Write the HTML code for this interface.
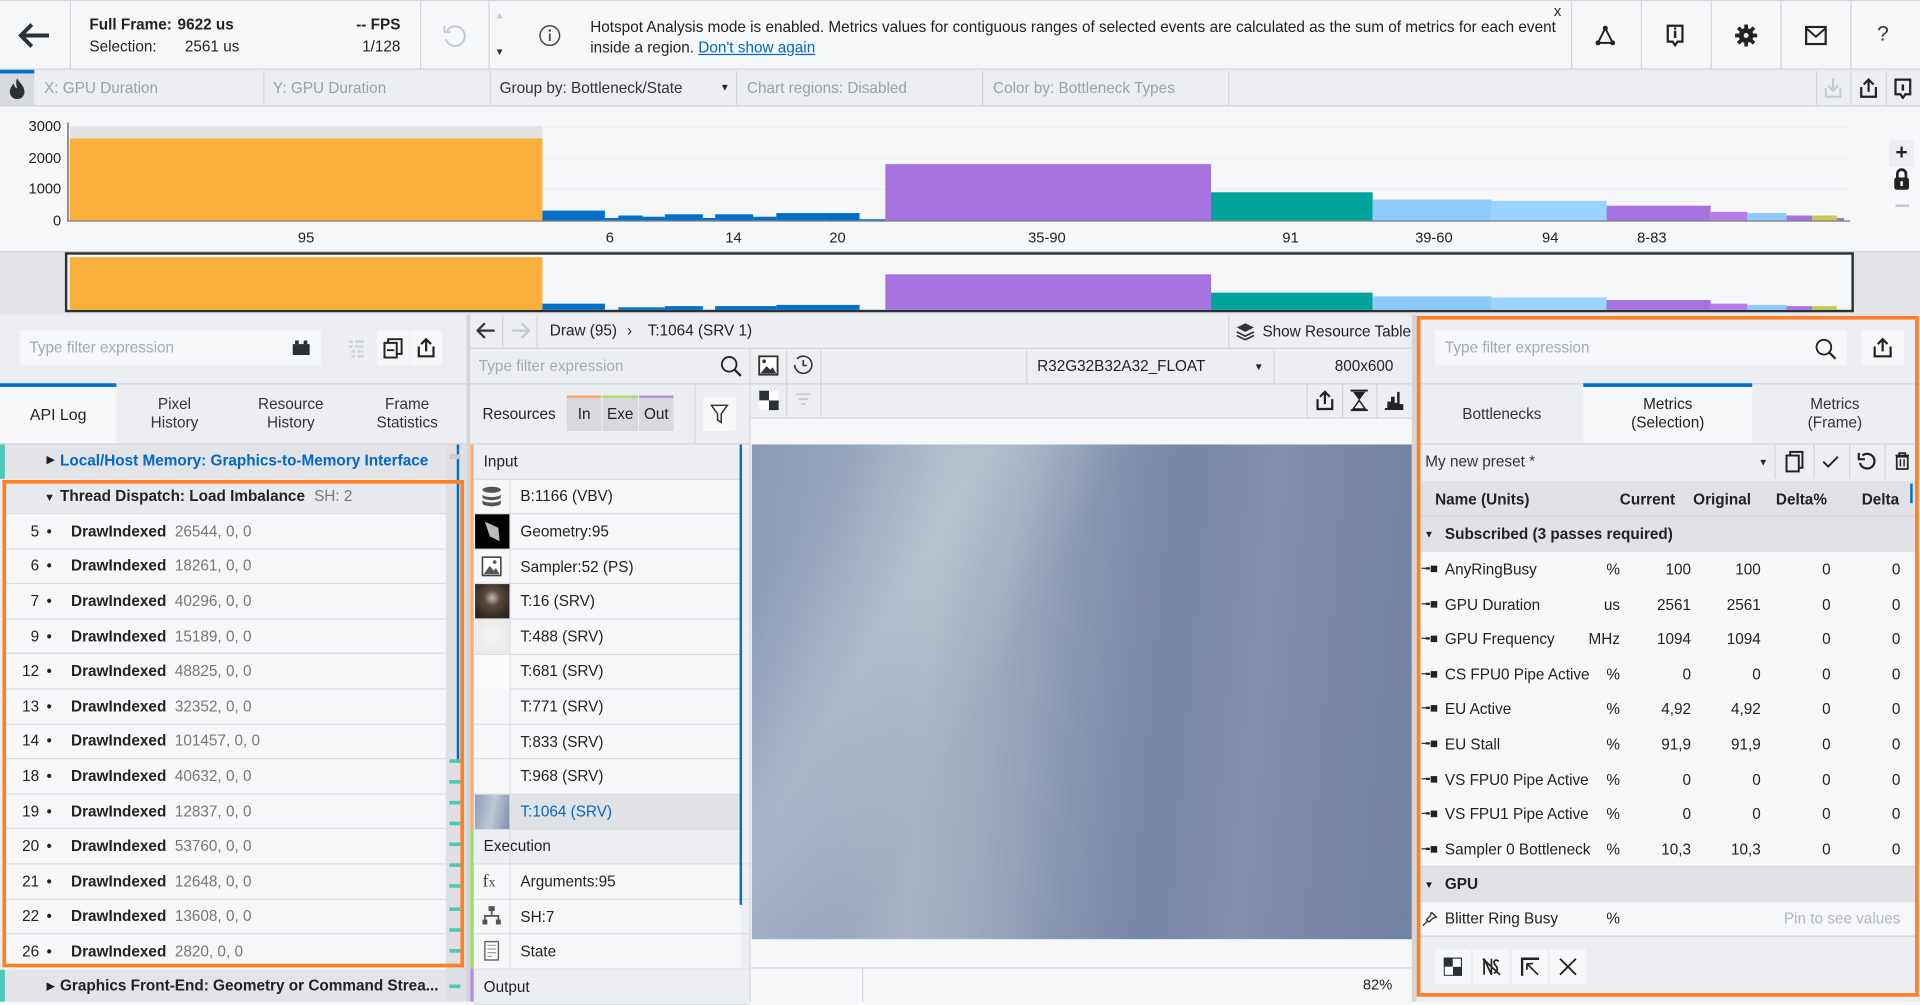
<!DOCTYPE html>
<html><head><meta charset="utf-8">
<style>
*{box-sizing:border-box;margin:0;padding:0}
html,body{width:1920px;height:1001px;overflow:hidden;background:#f6f7f9}
body{font-family:"Liberation Sans",sans-serif;color:#222;font-size:12.5px}
#w{position:absolute;left:0;top:0;width:1568px;height:818px;transform:scale(1.22449);transform-origin:0 0;background:#f6f7f9}
.a{position:absolute;white-space:nowrap}
.g{color:#9aa0a8}
.row{position:absolute;left:0;height:28.6px;border-bottom:1px solid #dcdee2;display:flex;align-items:center;white-space:nowrap}
.tb{background:#eceef1}
.bar{position:absolute}
.cell{position:absolute;text-align:right;white-space:nowrap}
</style></head><body><div id="w">

<!-- top bar -->
<div class="a" style="left:0;top:0;width:1568px;height:57px;background:#f6f7f9;border-top:1px solid #d3d5d9;border-bottom:1px solid #cfd1d5"></div>
<div class="a" style="left:57px;top:1px;width:1px;height:56px;background:#d3d5d9"></div>
<div class="a" style="left:343px;top:1px;width:1px;height:56px;background:#d3d5d9"></div>
<div class="a" style="left:399px;top:1px;width:1px;height:56px;background:#d3d5d9"></div>
<svg class="a" style="left:14px;top:17px" width="28" height="24" viewBox="0 0 28 24"><path d="M12 3 L3 12 L12 21 M3 12 H26" stroke="#2b2f36" stroke-width="3.2" fill="none"/></svg>
<div class="a" style="left:73px;top:13px;font-weight:bold">Full Frame:</div>
<div class="a" style="left:145px;top:13px;font-weight:bold">9622 us</div>
<div class="a" style="left:73px;top:31px">Selection:</div>
<div class="a" style="left:151px;top:31px">2561 us</div>
<div class="a" style="left:260px;top:13px;width:67px;text-align:right;font-weight:bold">-- FPS</div>
<div class="a" style="left:260px;top:31px;width:67px;text-align:right">1/128</div>
<svg class="a" style="left:360px;top:19px" width="22" height="22" viewBox="0 0 22 22"><path d="M5 6 A8 8 0 1 1 4 13" stroke="#c4c7cc" stroke-width="1.6" fill="none"/><path d="M3 2 V7 H8" stroke="#c4c7cc" stroke-width="1.6" fill="none"/></svg>
<div class="a" style="left:404px;top:8px;font-size:8px;color:#c4c7cc">▲</div>
<div class="a" style="left:404px;top:38px;font-size:8px;color:#333">▼</div>
<svg class="a" style="left:440px;top:20px" width="18" height="18" viewBox="0 0 18 18"><circle cx="9" cy="9" r="8" stroke="#444" stroke-width="1.2" fill="none"/><path d="M9 7.5V13.5" stroke="#444" stroke-width="1.4"/><circle cx="9" cy="5" r="1" fill="#444"/></svg>
<div class="a" style="left:482px;top:14px;font-size:12.5px;line-height:17px;width:790px;white-space:normal">Hotspot Analysis mode is enabled. Metrics values for contiguous ranges of selected events are calculated as the sum of metrics for each event inside a region. <span style="color:#0068c9;text-decoration:underline">Don't show again</span></div>
<div class="a" style="left:1269px;top:2px;font-size:12px">x</div>
<div class="a" style="left:1283px;top:1px;width:1px;height:56px;background:#d3d5d9"></div>
<div class="a" style="left:1340px;top:1px;width:1px;height:56px;background:#d3d5d9"></div>
<div class="a" style="left:1397px;top:1px;width:1px;height:56px;background:#d3d5d9"></div>
<div class="a" style="left:1454px;top:1px;width:1px;height:56px;background:#d3d5d9"></div>
<div class="a" style="left:1511px;top:1px;width:1px;height:56px;background:#d3d5d9"></div>
<svg class="a" style="left:1302px;top:20px" width="18" height="18" viewBox="0 0 18 18"><path d="M9 3 L3 15 H15 Z" stroke="#222" stroke-width="1.6" fill="none"/><circle cx="9" cy="3" r="2" fill="#222"/><circle cx="3" cy="15" r="2" fill="#222"/><circle cx="15" cy="15" r="2" fill="#222"/></svg>
<svg class="a" style="left:1360px;top:19px" width="16" height="20" viewBox="0 0 16 20"><path d="M2 2 H14 V15 H10 L8 18 L6 15 H2 Z" stroke="#222" stroke-width="1.8" fill="none"/><path d="M8 6V12" stroke="#222" stroke-width="2"/><circle cx="8" cy="4.3" r="1" fill="#222"/></svg>
<svg class="a" style="left:1416px;top:19px" width="20" height="20" viewBox="0 0 20 20"><circle cx="10" cy="10" r="6" fill="#222"/><path d="M10 1V19M1 10H19M3.6 3.6L16.4 16.4M16.4 3.6L3.6 16.4" stroke="#222" stroke-width="3"/><circle cx="10" cy="10" r="2" fill="#f6f7f9"/></svg>
<svg class="a" style="left:1474px;top:21px" width="18" height="16" viewBox="0 0 18 16"><rect x="1" y="1" width="16" height="14" stroke="#222" stroke-width="1.8" fill="none"/><path d="M1 2 L9 9 L17 2" stroke="#222" stroke-width="1.6" fill="none"/></svg>
<div class="a" style="left:1533px;top:18px;font-size:17px;color:#333">?</div>

<!-- toolbar -->
<div class="a tb" style="left:0;top:57px;width:1568px;height:30px;border-bottom:1px solid #cfd1d5"></div>
<div class="a" style="left:0;top:57px;width:28px;height:30px;background:#d7d9dd;border-top:3px solid #0070c9"></div>
<svg class="a" style="left:7px;top:63px" width="14" height="18" viewBox="0 0 14 18"><path d="M7 1 C9 5 13 7 13 12 A6 6 0 0 1 1 12 C1 9 3 7 4 5 C5 8 6 9 7 9 C6 6 6 3 7 1Z" fill="#2b2f36"/></svg>
<div class="a g" style="left:36px;top:65px">X: GPU Duration</div>
<div class="a" style="left:215px;top:58px;width:1px;height:29px;background:#d3d5d9"></div>
<div class="a g" style="left:223px;top:65px">Y: GPU Duration</div>
<div class="a" style="left:400px;top:58px;width:1px;height:29px;background:#d3d5d9"></div>
<div class="a" style="left:408px;top:65px;color:#333">Group by: Bottleneck/State</div>
<div class="a" style="left:588px;top:67px;font-size:8px">▼</div>
<div class="a" style="left:601px;top:58px;width:1px;height:29px;background:#d3d5d9"></div>
<div class="a g" style="left:610px;top:65px">Chart regions: Disabled</div>
<div class="a" style="left:802px;top:58px;width:1px;height:29px;background:#d3d5d9"></div>
<div class="a g" style="left:811px;top:65px">Color by: Bottleneck Types</div>
<div class="a" style="left:1003px;top:58px;width:1px;height:29px;background:#d3d5d9"></div>
<div class="a" style="left:1483px;top:58px;width:1px;height:29px;background:#d3d5d9"></div>
<div class="a" style="left:1511px;top:58px;width:1px;height:29px;background:#d3d5d9"></div>
<div class="a" style="left:1540px;top:58px;width:1px;height:29px;background:#d3d5d9"></div>
<svg class="a" style="left:1489px;top:63px" width="16" height="18" viewBox="0 0 16 18"><path d="M8 1V11M4 7L8 11L12 7M2 9V16H14V9" stroke="#c4c7cc" stroke-width="1.6" fill="none"/></svg>
<svg class="a" style="left:1518px;top:63px" width="16" height="18" viewBox="0 0 16 18"><path d="M8 12V2M4 6L8 2L12 6M2 8V16H14V8" stroke="#222" stroke-width="1.8" fill="none"/></svg>
<svg class="a" style="left:1546px;top:63px" width="16" height="18" viewBox="0 0 16 18"><path d="M2 2 H14 V14 H10 L8 17 L6 14 H2 Z" stroke="#222" stroke-width="1.8" fill="none"/><path d="M8 6V11" stroke="#222" stroke-width="2"/></svg>

<!-- chart -->
<div class="a" style="left:0;top:88px;width:1568px;height:117px;background:#f6f7f9"></div>
<div class="a" style="left:56px;top:103px;width:1455px;height:1px;background:#eceef1"></div>
<div class="a" style="left:56px;top:129px;width:1455px;height:1px;background:#eceef1"></div>
<div class="a" style="left:56px;top:154px;width:1455px;height:1px;background:#eceef1"></div>
<div class="a" style="left:55px;top:100px;width:1px;height:81px;background:#555"></div>
<div class="a" style="left:10px;top:96px;width:40px;text-align:right;font-size:12px">3000</div>
<div class="a" style="left:10px;top:122px;width:40px;text-align:right;font-size:12px">2000</div>
<div class="a" style="left:10px;top:147px;width:40px;text-align:right;font-size:12px">1000</div>
<div class="a" style="left:10px;top:173px;width:40px;text-align:right;font-size:12px">0</div>
<div class="bar" style="left:57px;top:103px;width:386px;height:10px;background:#e1e2e6"></div>
<div class="bar" style="left:57px;top:113px;width:386px;height:67px;background:#fbb03b"></div>
<div class="bar" style="left:443px;top:172px;width:51px;height:8px;background:#0070c9"></div>
<div class="bar" style="left:494px;top:178px;width:11px;height:2px;background:#0070c9"></div>
<div class="bar" style="left:505px;top:176px;width:20px;height:4px;background:#0070c9"></div>
<div class="bar" style="left:525px;top:177px;width:18px;height:3px;background:#0070c9"></div>
<div class="bar" style="left:543px;top:175px;width:31px;height:5px;background:#0070c9"></div>
<div class="bar" style="left:574px;top:178px;width:10px;height:2px;background:#0070c9"></div>
<div class="bar" style="left:584px;top:175px;width:31px;height:5px;background:#0070c9"></div>
<div class="bar" style="left:615px;top:177px;width:19px;height:3px;background:#0070c9"></div>
<div class="bar" style="left:634px;top:174px;width:41px;height:6px;background:#0070c9"></div>
<div class="bar" style="left:675px;top:174px;width:27px;height:6px;background:#006cc2"></div>
<div class="bar" style="left:702px;top:179px;width:21px;height:1px;background:#0070c9"></div>
<div class="bar" style="left:723px;top:134px;width:266px;height:46px;background:#a773e0"></div>
<div class="bar" style="left:989px;top:157px;width:132px;height:23px;background:#00a49c"></div>
<div class="bar" style="left:1121px;top:163px;width:97px;height:17px;background:#8ccbfb"></div>
<div class="bar" style="left:1218px;top:164px;width:94px;height:16px;background:#9ad3fd"></div>
<div class="bar" style="left:1312px;top:168px;width:85px;height:12px;background:#a773e0"></div>
<div class="bar" style="left:1397px;top:173px;width:30px;height:7px;background:#b37eec"></div>
<div class="bar" style="left:1427px;top:174px;width:32px;height:6px;background:#8ccbfb"></div>
<div class="bar" style="left:1459px;top:176px;width:21px;height:4px;background:#a773e0"></div>
<div class="bar" style="left:1480px;top:176px;width:20px;height:4px;background:#c4cd52"></div>
<div class="bar" style="left:1500px;top:178px;width:6px;height:2px;background:#a773e0"></div>
<div class="a" style="left:55px;top:180px;width:1456px;height:1px;background:#777"></div>
<div class="a" style="left:240px;top:187px;width:20px;text-align:center;font-size:12px">95</div>
<div class="a" style="left:488px;top:187px;width:20px;text-align:center;font-size:12px">6</div>
<div class="a" style="left:589px;top:187px;width:20px;text-align:center;font-size:12px">14</div>
<div class="a" style="left:674px;top:187px;width:20px;text-align:center;font-size:12px">20</div>
<div class="a" style="left:835px;top:187px;width:40px;text-align:center;font-size:12px">35-90</div>
<div class="a" style="left:1044px;top:187px;width:20px;text-align:center;font-size:12px">91</div>
<div class="a" style="left:1151px;top:187px;width:40px;text-align:center;font-size:12px">39-60</div>
<div class="a" style="left:1256px;top:187px;width:20px;text-align:center;font-size:12px">94</div>
<div class="a" style="left:1329px;top:187px;width:40px;text-align:center;font-size:12px">8-83</div>
<div class="a" style="left:1543px;top:114px;width:20px;height:22px;background:#eceef1;text-align:center;font-size:17px;font-weight:bold;line-height:21px">+</div>
<svg class="a" style="left:1546px;top:137px" width="14" height="19" viewBox="0 0 14 19"><path d="M3.5 8V5A3.5 3.5 0 0 1 10.5 5V8" stroke="#222" stroke-width="2.2" fill="none"/><rect x="1" y="8" width="12" height="10" rx="2" fill="#222"/><rect x="6" y="11" width="2" height="4" fill="#fff"/></svg>
<div class="a" style="left:1548px;top:167px;width:11px;height:2px;background:#c4c7cc"></div>

<!-- overview -->
<div class="a" style="left:0;top:205px;width:1568px;height:52px;background:#e3e4e8;border-top:1px solid #cfd1d5"></div>
<div class="a" style="left:53px;top:206px;width:1461px;height:49px;background:#f6f7f9;border:2px solid #2b2f36"></div>
<div class="bar" style="left:57px;top:210px;width:386px;height:43px;background:#fbb03b"></div>
<div class="bar" style="left:443px;top:248px;width:51px;height:5px;background:#0070c9"></div>
<div class="bar" style="left:505px;top:251px;width:38px;height:2px;background:#0070c9"></div>
<div class="bar" style="left:543px;top:250px;width:31px;height:3px;background:#0070c9"></div>
<div class="bar" style="left:584px;top:250px;width:50px;height:3px;background:#0070c9"></div>
<div class="bar" style="left:634px;top:249px;width:68px;height:4px;background:#0070c9"></div>
<div class="bar" style="left:723px;top:224px;width:266px;height:29px;background:#a773e0"></div>
<div class="bar" style="left:989px;top:239px;width:132px;height:14px;background:#00a49c"></div>
<div class="bar" style="left:1121px;top:242px;width:97px;height:11px;background:#8ccbfb"></div>
<div class="bar" style="left:1218px;top:243px;width:94px;height:10px;background:#9ad3fd"></div>
<div class="bar" style="left:1312px;top:245px;width:85px;height:8px;background:#a773e0"></div>
<div class="bar" style="left:1397px;top:248px;width:30px;height:5px;background:#b37eec"></div>
<div class="bar" style="left:1427px;top:249px;width:32px;height:4px;background:#8ccbfb"></div>
<div class="bar" style="left:1459px;top:250px;width:21px;height:3px;background:#a773e0"></div>
<div class="bar" style="left:1480px;top:250px;width:20px;height:3px;background:#c4cd52"></div>

<!-- LEFT PANEL -->
<div class="a tb" style="left:0;top:257px;width:381px;height:561px"></div>
<div class="a" style="left:381px;top:257px;width:3px;height:561px;background:#d3d5d9"></div>
<div class="a" style="left:16px;top:270px;width:246px;height:28px;background:#f6f7f9"></div>
<div class="a g" style="left:24px;top:277px;color:#a5aab1">Type filter expression</div>
<svg class="a" style="left:239px;top:278px" width="14" height="12" viewBox="0 0 14 12"><rect x="0" y="3" width="14" height="9" fill="#2b2f36"/><rect x="2" y="0" width="3" height="3" fill="#2b2f36"/><rect x="9" y="0" width="3" height="3" fill="#2b2f36"/></svg>
<svg class="a" style="left:284px;top:277px" width="14" height="16" viewBox="0 0 14 16"><path d="M1 2h3M6 2h7M1 6h3M6 6h7M3 10h3M8 10h5M3 14h3M8 14h5" stroke="#d0d3d8" stroke-width="2"/></svg>
<div class="a" style="left:308px;top:270px;width:26px;height:28px;background:#f6f7f9"></div>
<div class="a" style="left:335px;top:270px;width:26px;height:28px;background:#f6f7f9"></div>
<svg class="a" style="left:313px;top:276px" width="16" height="17" viewBox="0 0 16 17"><rect x="1" y="4" width="10" height="12" stroke="#222" stroke-width="1.6" fill="none"/><path d="M4 4V1H15V13H11" stroke="#222" stroke-width="1.6" fill="none"/><path d="M3 10H9" stroke="#222" stroke-width="1.6"/></svg>
<svg class="a" style="left:340px;top:275px" width="16" height="18" viewBox="0 0 16 18"><path d="M8 12V2M4 6L8 2L12 6M2 8V16H14V8" stroke="#222" stroke-width="1.8" fill="none"/></svg>
<div class="a" style="left:0;top:313px;width:381px;height:1px;background:#d3d5d9"></div>
<div class="a" style="left:0;top:313px;width:95px;height:49px;background:#f6f7f9;border-top:3px solid #0070c9"></div>
<div class="a" style="left:0;top:331px;width:95px;text-align:center;font-size:13px">API Log</div>
<div class="a" style="left:95px;top:323px;width:95px;text-align:center;line-height:15px;color:#333">Pixel<br>History</div>
<div class="a" style="left:190px;top:323px;width:95px;text-align:center;line-height:15px;color:#333">Resource<br>History</div>
<div class="a" style="left:285px;top:323px;width:95px;text-align:center;line-height:15px;color:#333">Frame<br>Statistics</div>
<div class="a" style="left:0;top:362px;width:381px;height:1px;background:#d3d5d9"></div>
<!-- tree -->
<div class="a" style="left:0;top:363px;width:364px;height:28px;background:#e3e4e8"></div>
<div class="a" style="left:0;top:363px;width:4px;height:28px;background:#4ec9b8"></div>
<div class="a" style="left:38px;top:370px;font-size:9px">▶</div>
<div class="a" style="left:49px;top:369px;font-weight:bold;color:#0068c9">Local/Host Memory: Graphics-to-Memory Interface</div>
<div class="a" style="left:4px;top:393px;width:360px;height:27px;background:#e9eaee;border-bottom:1px solid #dcdee2"></div>
<div class="a" style="left:36px;top:401px;font-size:9px">▼</div>
<div class="a" style="left:49px;top:398px;font-weight:bold">Thread Dispatch: Load Imbalance <span style="font-weight:normal;color:#777;margin-left:4px">SH: 2</span></div>
<div class="a" style="left:4px;top:420px;width:360px;height:372px;background:#f6f7f9"></div>
<div class="a" style="left:4px;top:420px;width:360px">
<div class="row" style="top:0;width:360px"><span style="width:28px;text-align:right">5</span><span style="width:26px;padding-left:6px">•</span><b>DrawIndexed</b><span style="color:#777;margin-left:7px">26544, 0, 0</span></div>
<div class="row" style="top:28.6px;width:360px"><span style="width:28px;text-align:right">6</span><span style="width:26px;padding-left:6px">•</span><b>DrawIndexed</b><span style="color:#777;margin-left:7px">18261, 0, 0</span></div>
<div class="row" style="top:57.2px;width:360px"><span style="width:28px;text-align:right">7</span><span style="width:26px;padding-left:6px">•</span><b>DrawIndexed</b><span style="color:#777;margin-left:7px">40296, 0, 0</span></div>
<div class="row" style="top:85.8px;width:360px"><span style="width:28px;text-align:right">9</span><span style="width:26px;padding-left:6px">•</span><b>DrawIndexed</b><span style="color:#777;margin-left:7px">15189, 0, 0</span></div>
<div class="row" style="top:114.4px;width:360px"><span style="width:28px;text-align:right">12</span><span style="width:26px;padding-left:6px">•</span><b>DrawIndexed</b><span style="color:#777;margin-left:7px">48825, 0, 0</span></div>
<div class="row" style="top:143px;width:360px"><span style="width:28px;text-align:right">13</span><span style="width:26px;padding-left:6px">•</span><b>DrawIndexed</b><span style="color:#777;margin-left:7px">32352, 0, 0</span></div>
<div class="row" style="top:171.6px;width:360px"><span style="width:28px;text-align:right">14</span><span style="width:26px;padding-left:6px">•</span><b>DrawIndexed</b><span style="color:#777;margin-left:7px">101457, 0, 0</span></div>
<div class="row" style="top:200.2px;width:360px"><span style="width:28px;text-align:right">18</span><span style="width:26px;padding-left:6px">•</span><b>DrawIndexed</b><span style="color:#777;margin-left:7px">40632, 0, 0</span></div>
<div class="row" style="top:228.8px;width:360px"><span style="width:28px;text-align:right">19</span><span style="width:26px;padding-left:6px">•</span><b>DrawIndexed</b><span style="color:#777;margin-left:7px">12837, 0, 0</span></div>
<div class="row" style="top:257.4px;width:360px"><span style="width:28px;text-align:right">20</span><span style="width:26px;padding-left:6px">•</span><b>DrawIndexed</b><span style="color:#777;margin-left:7px">53760, 0, 0</span></div>
<div class="row" style="top:286px;width:360px"><span style="width:28px;text-align:right">21</span><span style="width:26px;padding-left:6px">•</span><b>DrawIndexed</b><span style="color:#777;margin-left:7px">12648, 0, 0</span></div>
<div class="row" style="top:314.6px;width:360px"><span style="width:28px;text-align:right">22</span><span style="width:26px;padding-left:6px">•</span><b>DrawIndexed</b><span style="color:#777;margin-left:7px">13608, 0, 0</span></div>
<div class="row" style="top:343.2px;width:360px;border:none"><span style="width:28px;text-align:right">26</span><span style="width:26px;padding-left:6px">•</span><b>DrawIndexed</b><span style="color:#777;margin-left:7px">2820, 0, 0</span></div>
</div>
<div class="a" style="left:0;top:792px;width:364px;height:26px;background:#e3e4e8"></div>
<div class="a" style="left:0;top:792px;width:4px;height:26px;background:#4ec9b8"></div>
<div class="a" style="left:38px;top:800px;font-size:9px">▶</div>
<div class="a" style="left:49px;top:798px;font-weight:bold">Graphics Front-End: Geometry or Command Strea...</div>
<!-- scrollbar -->
<div class="a" style="left:364px;top:363px;width:17px;height:455px;background:#dfe0e4"></div>
<div class="a" style="left:373px;top:363px;width:2px;height:260px;background:#0070c9"></div>
<div class="a" style="left:367px;top:371px;width:9px;height:4px;background:#c9ccd1"></div>
<div class="a" style="left:367px;top:620px;width:9px;height:3px;background:#4ec9b8"></div>
<div class="a" style="left:367px;top:637px;width:9px;height:3px;background:#4ec9b8"></div>
<div class="a" style="left:367px;top:654px;width:9px;height:3px;background:#4ec9b8"></div>
<div class="a" style="left:367px;top:671px;width:9px;height:3px;background:#4ec9b8"></div>
<div class="a" style="left:367px;top:688px;width:9px;height:3px;background:#4ec9b8"></div>
<div class="a" style="left:367px;top:705px;width:9px;height:3px;background:#4ec9b8"></div>
<div class="a" style="left:367px;top:722px;width:9px;height:3px;background:#4ec9b8"></div>
<div class="a" style="left:367px;top:741px;width:9px;height:3px;background:#4ec9b8"></div>
<div class="a" style="left:367px;top:758px;width:9px;height:3px;background:#4ec9b8"></div>
<div class="a" style="left:367px;top:775px;width:9px;height:3px;background:#4ec9b8"></div>
<div class="a" style="left:367px;top:804px;width:9px;height:3px;background:#4ec9b8"></div>
<div class="a" style="left:2px;top:392px;width:377px;height:398px;border:3px solid #ff7f27"></div>

<!-- MIDDLE: header -->
<div class="a tb" style="left:384px;top:257px;width:773px;height:28px;border-bottom:1px solid #d3d5d9"></div>
<svg class="a" style="left:389px;top:263px" width="16" height="14" viewBox="0 0 16 14"><path d="M7 1L1 7L7 13M1 7H15" stroke="#333" stroke-width="1.8" fill="none"/></svg>
<svg class="a" style="left:417px;top:263px" width="16" height="14" viewBox="0 0 16 14"><path d="M9 1L15 7L9 13M15 7H1" stroke="#c4c7cc" stroke-width="1.8" fill="none"/></svg>
<div class="a" style="left:410px;top:258px;width:1px;height:27px;background:#d3d5d9"></div>
<div class="a" style="left:438px;top:258px;width:1px;height:27px;background:#d3d5d9"></div>
<div class="a" style="left:449px;top:263px">Draw (95)</div>
<div class="a" style="left:512px;top:263px">›</div>
<div class="a" style="left:529px;top:263px">T:1064 (SRV 1)</div>
<div class="a" style="left:1003px;top:258px;width:1px;height:27px;background:#d3d5d9"></div>
<svg class="a" style="left:1009px;top:263px" width="16" height="15" viewBox="0 0 16 15"><path d="M8 1L15 4.5L8 8L1 4.5Z" fill="#333"/><path d="M1 8L8 11.5L15 8M1 11L8 14.5L15 11" stroke="#333" stroke-width="1.4" fill="none"/></svg>
<div class="a" style="left:1031px;top:264px">Show Resource Table</div>
<!-- resources list panel -->
<div class="a tb" style="left:384px;top:285px;width:228px;height:533px"></div>
<div class="a g" style="left:391px;top:292px;color:#a5aab1">Type filter expression</div>
<svg class="a" style="left:588px;top:290px" width="18" height="18" viewBox="0 0 18 18"><circle cx="7.5" cy="7.5" r="6" stroke="#222" stroke-width="1.5" fill="none"/><path d="M12 12L17 17" stroke="#222" stroke-width="1.8"/></svg>
<div class="a" style="left:384px;top:313px;width:228px;height:1px;background:#d3d5d9"></div>
<div class="a" style="left:394px;top:331px">Resources</div>
<div class="a" style="left:463px;top:323px;width:28px;height:29px;background:#d7d9dd;border-top:2px solid #f5a96a;text-align:center;line-height:27px">In</div>
<div class="a" style="left:492px;top:323px;width:29px;height:29px;background:#d7d9dd;border-top:2px solid #a4dd74;text-align:center;line-height:27px">Exe</div>
<div class="a" style="left:522px;top:323px;width:28px;height:29px;background:#d7d9dd;border-top:2px solid #b390e6;text-align:center;line-height:27px">Out</div>
<div class="a" style="left:567px;top:313px;width:1px;height:50px;background:#d3d5d9"></div>
<div class="a" style="left:574px;top:324px;width:27px;height:28px;background:#f6f7f9"></div>
<svg class="a" style="left:580px;top:330px" width="15" height="16" viewBox="0 0 15 16"><path d="M1 1H14L9 8V15L6 13V8Z" stroke="#333" stroke-width="1.2" fill="none"/></svg>
<div class="a" style="left:384px;top:362px;width:228px;height:1px;background:#d3d5d9"></div>
<div class="a" style="left:384px;top:363px;width:3px;height:314px;background:#f6b27a"></div>
<div class="a" style="left:384px;top:677px;width:3px;height:114px;background:#a4dd74"></div>
<div class="a" style="left:384px;top:791px;width:3px;height:27px;background:#b390e6"></div>
<div class="a" style="left:387px;top:363px;width:218px;height:455px;background:#f6f7f9"></div>
<div class="a" style="left:387px;top:363px;width:218px">
<div class="row" style="top:0;width:218px;padding-left:8px;background:#eceef1">Input</div>
<div class="row" style="top:28.6px;width:218px;padding-left:38px">B:1166 (VBV)</div>
<div class="row" style="top:57.2px;width:218px;padding-left:38px">Geometry:95</div>
<div class="row" style="top:85.8px;width:218px;padding-left:38px">Sampler:52 (PS)</div>
<div class="row" style="top:114.4px;width:218px;padding-left:38px">T:16 (SRV)</div>
<div class="row" style="top:143px;width:218px;padding-left:38px">T:488 (SRV)</div>
<div class="row" style="top:171.6px;width:218px;padding-left:38px">T:681 (SRV)</div>
<div class="row" style="top:200.2px;width:218px;padding-left:38px">T:771 (SRV)</div>
<div class="row" style="top:228.8px;width:218px;padding-left:38px">T:833 (SRV)</div>
<div class="row" style="top:257.4px;width:218px;padding-left:38px">T:968 (SRV)</div>
<div class="row" style="top:286px;width:218px;padding-left:38px;background:#e1e2e6;color:#0068c9">T:1064 (SRV)</div>
<div class="row" style="top:314.6px;width:225px;padding-left:8px;background:#eceef1">Execution</div>
<div class="row" style="top:343.2px;width:225px;padding-left:38px">Arguments:95</div>
<div class="row" style="top:371.8px;width:225px;padding-left:38px">SH:7</div>
<div class="row" style="top:400.4px;width:225px;padding-left:38px">State</div>
<div class="row" style="top:429px;width:225px;padding-left:8px;background:#eceef1">Output</div>
</div>
<div class="a" style="left:416px;top:392px;width:1px;height:399px;background:#dcdee2"></div>
<!-- thumbnails -->
<svg class="a" style="left:393px;top:397px" width="17" height="17" viewBox="0 0 17 17"><ellipse cx="8.5" cy="3" rx="7.5" ry="2.5" fill="#555"/><path d="M1 6.5A7.5 2.5 0 0 0 16 6.5V9A7.5 2.5 0 0 1 1 9Z M1 11A7.5 2.5 0 0 0 16 11V14A7.5 2.5 0 0 1 1 14Z" fill="#555"/></svg>
<div class="a" style="left:388px;top:420px;width:28px;height:28px;background:#000"></div>
<svg class="a" style="left:395px;top:425px" width="14" height="18" viewBox="0 0 14 18"><path d="M1 1L12 6L13 17L5 13Z" fill="#bbb"/></svg>
<svg class="a" style="left:393px;top:454px" width="17" height="17" viewBox="0 0 17 17"><rect x="1" y="1" width="15" height="15" stroke="#444" stroke-width="1.3" fill="#fff"/><path d="M2 15L7 8L10 12L12 10L15 15Z" fill="#555"/><circle cx="11" cy="5" r="1.5" fill="#555"/></svg>
<div class="a" style="left:388px;top:477px;width:28px;height:28px;background:radial-gradient(circle at 50% 40%,#bbb 0,#5a4a3e 30%,#2c2520 80%)"></div>
<div class="a" style="left:388px;top:506px;width:28px;height:28px;background:radial-gradient(circle,#f4f4f4,#e8e8e8)"></div>
<div class="a" style="left:388px;top:535px;width:28px;height:28px;background:#fbfbfb"></div>
<div class="a" style="left:388px;top:649px;width:28px;height:28px;background:linear-gradient(100deg,#8d9fba,#c0c9d6 50%,#7e90ae)"></div>
<div class="a" style="left:394px;top:712px;font-family:'Liberation Serif',serif;font-size:15px;color:#444">f<span style="font-size:11px">x</span></div>
<svg class="a" style="left:393px;top:739px" width="17" height="17" viewBox="0 0 17 17"><rect x="6" y="1" width="5" height="4" fill="#555"/><path d="M8.5 5V9M3 13V9H14V13" stroke="#555" stroke-width="1.4" fill="none"/><rect x="1" y="12" width="4" height="4" fill="#555"/><rect x="12" y="12" width="4" height="4" fill="#555"/></svg>
<svg class="a" style="left:395px;top:768px" width="13" height="17" viewBox="0 0 13 17"><rect x="1" y="1" width="11" height="15" stroke="#666" stroke-width="1.2" fill="#fff"/><path d="M3 4h7M3 7h7M3 10h7M3 13h4" stroke="#999" stroke-width="1"/></svg>
<div class="a" style="left:604px;top:363px;width:2px;height:376px;background:#0070c9"></div>
<div class="a" style="left:612px;top:285px;width:1px;height:533px;background:#d3d5d9"></div>

<!-- image viewer -->
<div class="a tb" style="left:613px;top:285px;width:541px;height:56px"></div>
<div class="a" style="left:613px;top:313px;width:541px;height:1px;background:#d3d5d9"></div>
<div class="a" style="left:613px;top:341px;width:541px;height:1px;background:#d3d5d9"></div>
<div class="a" style="left:642px;top:286px;width:1px;height:55px;background:#d3d5d9"></div>
<div class="a" style="left:670px;top:286px;width:1px;height:55px;background:#d3d5d9"></div>
<div class="a" style="left:838px;top:286px;width:1px;height:27px;background:#d3d5d9"></div>
<div class="a" style="left:1040px;top:286px;width:1px;height:27px;background:#d3d5d9"></div>
<svg class="a" style="left:619px;top:290px" width="17" height="17" viewBox="0 0 17 17"><rect x="1" y="1" width="15" height="15" stroke="#333" stroke-width="1.5" fill="#fff"/><path d="M2 15L7 9L10 12L12 10L15 15Z" fill="#333"/><circle cx="5" cy="5" r="1.5" fill="#333"/></svg>
<svg class="a" style="left:647px;top:289px" width="18" height="18" viewBox="0 0 18 18"><path d="M4 4A7 7 0 1 1 2 9" stroke="#333" stroke-width="1.3" fill="none"/><path d="M9 5V9.5H12" stroke="#333" stroke-width="1.3" fill="none"/></svg>
<div class="a" style="left:847px;top:292px">R32G32B32A32_FLOAT</div>
<div class="a" style="left:1024px;top:295px;font-size:8px">▼</div>
<div class="a" style="left:1090px;top:292px">800x600</div>
<svg class="a" style="left:620px;top:319px" width="16" height="16" viewBox="0 0 16 16"><rect x="0" y="0" width="8" height="8" fill="#2b2f36"/><rect x="8" y="8" width="8" height="8" fill="#2b2f36"/><rect x="8" y="0" width="8" height="8" fill="#fff"/><rect x="0" y="8" width="8" height="8" fill="#fff"/></svg>
<svg class="a" style="left:649px;top:320px" width="14" height="14" viewBox="0 0 14 14"><path d="M1 2H13M3 6H11M5 10H9" stroke="#c9ccd1" stroke-width="1.5"/></svg>
<div class="a" style="left:1067px;top:314px;width:1px;height:27px;background:#d3d5d9"></div>
<div class="a" style="left:1096px;top:314px;width:1px;height:27px;background:#d3d5d9"></div>
<div class="a" style="left:1124px;top:314px;width:1px;height:27px;background:#d3d5d9"></div>
<svg class="a" style="left:1074px;top:318px" width="16" height="18" viewBox="0 0 16 18"><path d="M8 12V2M4 6L8 2L12 6M2 8V16H14V8" stroke="#222" stroke-width="1.8" fill="none"/></svg>
<svg class="a" style="left:1102px;top:318px" width="16" height="18" viewBox="0 0 16 18"><path d="M1 1H15M1 17H15" stroke="#222" stroke-width="1.6"/><path d="M3 2H13L8 9Z" fill="#222"/><path d="M8 9L3 16H13Z" stroke="#222" stroke-width="1.2" fill="none"/></svg>
<svg class="a" style="left:1130px;top:318px" width="17" height="17" viewBox="0 0 17 17"><path d="M1 16H16" stroke="#222" stroke-width="1.6"/><path d="M3 16V10H6V6H9V11H11V2H13V12H16V16Z" fill="#222"/></svg>
<div class="a" style="left:613px;top:342px;width:541px;height:448px;background:#f6f7f9"></div>
<div class="a" style="left:614px;top:363px;width:539px;height:404px;background:linear-gradient(95deg,#8a9cb8 0%,#95a5bd 15%,#a6b2c4 28%,#9caabf 38%,#8596b1 50%,#7686a5 62%,#8090ad 75%,#7686a4 88%,#7282a1 100%)"></div>
<div class="a" style="left:614px;top:363px;width:539px;height:404px;background:linear-gradient(120deg,rgba(255,255,255,0) 10%,rgba(215,222,232,0.35) 25%,rgba(255,255,255,0) 40%)"></div>
<div class="a" style="left:613px;top:790px;width:541px;height:1px;background:#d3d5d9"></div>
<div class="a" style="left:704px;top:791px;width:1px;height:27px;background:#d3d5d9"></div>
<div class="a" style="left:1113px;top:797px;font-size:12px">82%</div>
<div class="a" style="left:1153px;top:257px;width:4px;height:561px;background:#d3d5d9"></div>

<!-- RIGHT PANEL -->
<div class="a tb" style="left:1157px;top:257px;width:411px;height:561px"></div>
<div class="a" style="left:1172px;top:270px;width:336px;height:28px;background:#f6f7f9"></div>
<div class="a" style="left:1180px;top:277px;color:#a5aab1">Type filter expression</div>
<svg class="a" style="left:1482px;top:276px" width="18" height="18" viewBox="0 0 18 18"><circle cx="7.5" cy="7.5" r="6" stroke="#222" stroke-width="1.5" fill="none"/><path d="M12 12L17 17" stroke="#222" stroke-width="1.8"/></svg>
<div class="a" style="left:1520px;top:270px;width:35px;height:28px;background:#f6f7f9"></div>
<svg class="a" style="left:1529px;top:275px" width="17" height="18" viewBox="0 0 17 18"><path d="M8.5 12V2M4.5 6L8.5 2L12.5 6M2 8V16H15V8" stroke="#222" stroke-width="1.8" fill="none"/></svg>
<div class="a" style="left:1157px;top:313px;width:411px;height:1px;background:#d3d5d9"></div>
<div class="a" style="left:1160px;top:331px;width:133px;text-align:center;color:#333">Bottlenecks</div>
<div class="a" style="left:1293px;top:313px;width:138px;height:49px;background:#f6f7f9;border-top:3px solid #0070c9"></div>
<div class="a" style="left:1293px;top:323px;width:138px;text-align:center;line-height:15px;color:#222">Metrics<br>(Selection)</div>
<div class="a" style="left:1431px;top:323px;width:135px;text-align:center;line-height:15px;color:#333">Metrics<br>(Frame)</div>
<div class="a" style="left:1157px;top:362px;width:411px;height:1px;background:#d3d5d9"></div>
<div class="a" style="left:1164px;top:370px;color:#333">My new preset *</div>
<div class="a" style="left:1436px;top:373px;font-size:8px">▼</div>
<div class="a" style="left:1449px;top:363px;width:1px;height:28px;background:#d3d5d9"></div>
<div class="a" style="left:1481px;top:363px;width:1px;height:28px;background:#d3d5d9"></div>
<div class="a" style="left:1510px;top:363px;width:1px;height:28px;background:#d3d5d9"></div>
<div class="a" style="left:1539px;top:363px;width:1px;height:28px;background:#d3d5d9"></div>
<svg class="a" style="left:1458px;top:368px" width="15" height="18" viewBox="0 0 15 18"><rect x="1" y="4" width="10" height="13" stroke="#222" stroke-width="1.6" fill="none"/><path d="M4 4V1H14V14H11" stroke="#222" stroke-width="1.6" fill="none"/></svg>
<svg class="a" style="left:1488px;top:371px" width="14" height="12" viewBox="0 0 14 12"><path d="M1 6L5 10L13 2" stroke="#222" stroke-width="1.6" fill="none"/></svg>
<svg class="a" style="left:1517px;top:369px" width="15" height="15" viewBox="0 0 15 15"><path d="M4 3A6 6 0 1 1 2 9" stroke="#222" stroke-width="1.8" fill="none"/><path d="M1 1V6H6" stroke="#222" stroke-width="1.8" fill="none"/></svg>
<svg class="a" style="left:1547px;top:369px" width="13" height="15" viewBox="0 0 13 15"><path d="M1 3H12M4 3V1H9V3" stroke="#222" stroke-width="1.4" fill="none"/><rect x="2" y="4" width="9" height="10" stroke="#222" stroke-width="1.4" fill="none"/><path d="M5 6V12M8 6V12" stroke="#222" stroke-width="1.2"/></svg>
<div class="a" style="left:1157px;top:393px;width:409px;height:29px;background:#e1e2e6;border-bottom:1px solid #d3d5d9"></div>
<div class="a" style="left:1172px;top:401px;font-weight:bold">Name (Units)</div>
<div class="cell" style="left:1320px;top:401px;width:48px;font-weight:bold">Current</div>
<div class="cell" style="left:1380px;top:401px;width:50px;font-weight:bold">Original</div>
<div class="cell" style="left:1440px;top:401px;width:52px;font-weight:bold">Delta%</div>
<div class="cell" style="left:1500px;top:401px;width:51px;font-weight:bold">Delta</div>
<div class="a" style="left:1560px;top:395px;width:2px;height:16px;background:#0070c9"></div>
<div class="a" style="left:1157px;top:422px;width:409px;height:29px;background:#e1e2e6"></div>
<div class="a" style="left:1163px;top:432px;font-size:8px">▼</div>
<div class="a" style="left:1180px;top:429px;font-weight:bold">Subscribed (3 passes required)</div>
<div class="a" style="left:1157px;top:451px;width:409px;height:257px;background:#f6f7f9;border-bottom:1px solid #d3d5d9"></div>
<div class="a" style="left:1157px;top:708px;width:409px;height:29px;background:#e1e2e6"></div>
<div class="a" style="left:1163px;top:718px;font-size:8px">▼</div>
<div class="a" style="left:1180px;top:715px;font-weight:bold">GPU</div>
<div class="a" style="left:1157px;top:737px;width:409px;height:28px;background:#f6f7f9;border-bottom:1px solid #d3d5d9"></div>
<svg class="a" style="left:1161px;top:744px" width="13" height="13" viewBox="0 0 13 13"><path d="M8 1L12 5L9 6L6 9L5 8L1 12M5 8L4 7L7 4L8 1" stroke="#333" stroke-width="1.1" fill="none"/></svg>
<div class="a" style="left:1180px;top:743px">Blitter Ring Busy</div>
<div class="cell" style="left:1300px;top:743px;width:23px">%</div>
<div class="cell" style="left:1420px;top:743px;width:132px;color:#b3b7bd">Pin to see values</div>
<div class="a" style="left:1172px;top:775px;width:29px;height:29px;background:#f6f7f9"></div>
<div class="a" style="left:1203px;top:775px;width:29px;height:29px;background:#f6f7f9"></div>
<div class="a" style="left:1235px;top:775px;width:29px;height:29px;background:#f6f7f9"></div>
<div class="a" style="left:1266px;top:775px;width:29px;height:29px;background:#f6f7f9"></div>
<svg class="a" style="left:1179px;top:782px" width="15" height="15" viewBox="0 0 16 16"><rect x="0" y="0" width="8" height="8" fill="#2b2f36"/><rect x="8" y="8" width="8" height="8" fill="#2b2f36"/><rect x="8" y="0" width="8" height="8" fill="#fff"/><rect x="0" y="8" width="8" height="8" fill="#fff"/><rect x="0.5" y="0.5" width="15" height="15" stroke="#2b2f36" fill="none"/></svg>
<svg class="a" style="left:1210px;top:782px" width="16" height="15" viewBox="0 0 16 15"><path d="M2 14V1L8 14V1M14 3C11 1 9 3 11 6C13 8 14 11 10 13M1 1L15 14" stroke="#222" stroke-width="1.4" fill="none"/></svg>
<svg class="a" style="left:1242px;top:782px" width="15" height="15" viewBox="0 0 15 15"><path d="M1 15V1H15" stroke="#222" stroke-width="2" fill="none"/><path d="M5 5L14 14M5 5H10M5 5V10" stroke="#222" stroke-width="1.4" fill="none"/></svg>
<svg class="a" style="left:1273px;top:782px" width="15" height="15" viewBox="0 0 15 15"><path d="M1 1L14 14M14 1L1 14" stroke="#222" stroke-width="1.5"/></svg>
<div class="a" style="left:1157px;top:258px;width:410px;height:556px;border:3px solid #ff7f27"></div>

<!-- metric rows -->
<div class="a" style="left:1161px;top:458px;font-size:11px">╼■</div><div class="a" style="left:1180px;top:458px">AnyRingBusy</div><div class="cell" style="left:1290px;top:458px;width:33px">%</div><div class="cell" style="left:1330px;top:458px;width:51px">100</div><div class="cell" style="left:1388px;top:458px;width:50px">100</div><div class="cell" style="left:1440px;top:458px;width:55px">0</div><div class="cell" style="left:1500px;top:458px;width:52px">0</div>
<div class="a" style="left:1161px;top:487px;font-size:11px">╼■</div><div class="a" style="left:1180px;top:487px">GPU Duration</div><div class="cell" style="left:1290px;top:487px;width:33px">us</div><div class="cell" style="left:1330px;top:487px;width:51px">2561</div><div class="cell" style="left:1388px;top:487px;width:50px">2561</div><div class="cell" style="left:1440px;top:487px;width:55px">0</div><div class="cell" style="left:1500px;top:487px;width:52px">0</div>
<div class="a" style="left:1161px;top:515px;font-size:11px">╼■</div><div class="a" style="left:1180px;top:515px">GPU Frequency</div><div class="cell" style="left:1290px;top:515px;width:33px">MHz</div><div class="cell" style="left:1330px;top:515px;width:51px">1094</div><div class="cell" style="left:1388px;top:515px;width:50px">1094</div><div class="cell" style="left:1440px;top:515px;width:55px">0</div><div class="cell" style="left:1500px;top:515px;width:52px">0</div>
<div class="a" style="left:1161px;top:544px;font-size:11px">╼■</div><div class="a" style="left:1180px;top:544px">CS FPU0 Pipe Active</div><div class="cell" style="left:1290px;top:544px;width:33px">%</div><div class="cell" style="left:1330px;top:544px;width:51px">0</div><div class="cell" style="left:1388px;top:544px;width:50px">0</div><div class="cell" style="left:1440px;top:544px;width:55px">0</div><div class="cell" style="left:1500px;top:544px;width:52px">0</div>
<div class="a" style="left:1161px;top:572px;font-size:11px">╼■</div><div class="a" style="left:1180px;top:572px">EU Active</div><div class="cell" style="left:1290px;top:572px;width:33px">%</div><div class="cell" style="left:1330px;top:572px;width:51px">4,92</div><div class="cell" style="left:1388px;top:572px;width:50px">4,92</div><div class="cell" style="left:1440px;top:572px;width:55px">0</div><div class="cell" style="left:1500px;top:572px;width:52px">0</div>
<div class="a" style="left:1161px;top:601px;font-size:11px">╼■</div><div class="a" style="left:1180px;top:601px">EU Stall</div><div class="cell" style="left:1290px;top:601px;width:33px">%</div><div class="cell" style="left:1330px;top:601px;width:51px">91,9</div><div class="cell" style="left:1388px;top:601px;width:50px">91,9</div><div class="cell" style="left:1440px;top:601px;width:55px">0</div><div class="cell" style="left:1500px;top:601px;width:52px">0</div>
<div class="a" style="left:1161px;top:630px;font-size:11px">╼■</div><div class="a" style="left:1180px;top:630px">VS FPU0 Pipe Active</div><div class="cell" style="left:1290px;top:630px;width:33px">%</div><div class="cell" style="left:1330px;top:630px;width:51px">0</div><div class="cell" style="left:1388px;top:630px;width:50px">0</div><div class="cell" style="left:1440px;top:630px;width:55px">0</div><div class="cell" style="left:1500px;top:630px;width:52px">0</div>
<div class="a" style="left:1161px;top:658px;font-size:11px">╼■</div><div class="a" style="left:1180px;top:658px">VS FPU1 Pipe Active</div><div class="cell" style="left:1290px;top:658px;width:33px">%</div><div class="cell" style="left:1330px;top:658px;width:51px">0</div><div class="cell" style="left:1388px;top:658px;width:50px">0</div><div class="cell" style="left:1440px;top:658px;width:55px">0</div><div class="cell" style="left:1500px;top:658px;width:52px">0</div>
<div class="a" style="left:1161px;top:687px;font-size:11px">╼■</div><div class="a" style="left:1180px;top:687px">Sampler 0 Bottleneck</div><div class="cell" style="left:1290px;top:687px;width:33px">%</div><div class="cell" style="left:1330px;top:687px;width:51px">10,3</div><div class="cell" style="left:1388px;top:687px;width:50px">10,3</div><div class="cell" style="left:1440px;top:687px;width:55px">0</div><div class="cell" style="left:1500px;top:687px;width:52px">0</div>

</div></body></html>
